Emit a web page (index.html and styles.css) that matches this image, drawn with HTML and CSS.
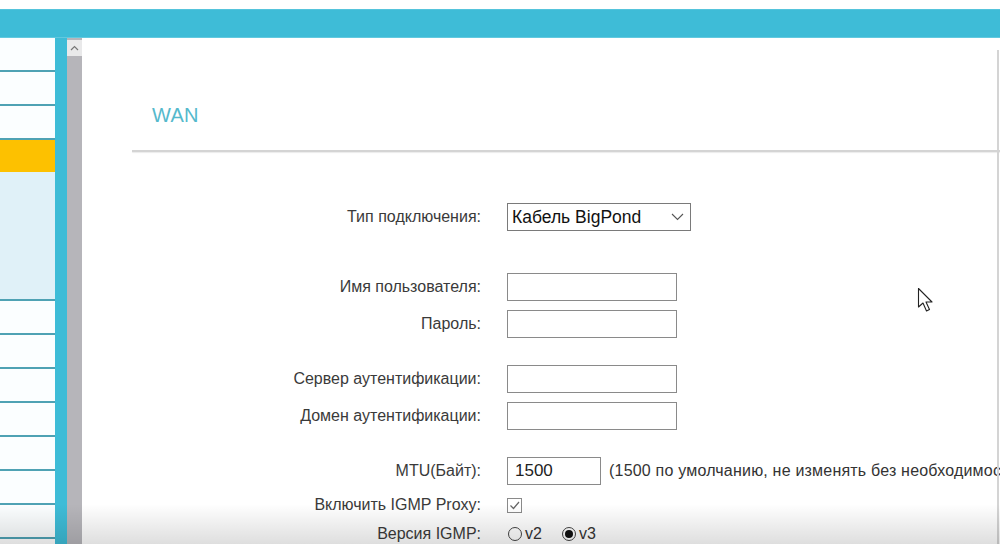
FILE: index.html
```html
<!DOCTYPE html>
<html lang="ru">
<head>
<meta charset="utf-8">
<title>WAN</title>
<link rel="stylesheet" href="styles.css">
</head>
<body>
<div class="page">
  <div class="topgap"></div>
  <div class="header"></div>
  <div class="main">
    <nav class="sidebar">
      <div class="item"></div>
      <div class="item"></div>
      <div class="item"></div>
      <div class="item active"></div>
      <div class="sub"></div>
      <div class="item"></div>
      <div class="item"></div>
      <div class="item"></div>
      <div class="item"></div>
      <div class="item"></div>
      <div class="item"></div>
      <div class="item"></div>
    </nav>
    <div class="divider"></div>
    <div class="scrollbar">
      <div class="scroll-btn">
        <svg width="9" height="6" viewBox="0 0 9 6"><path d="M1 5 L4.5 1.5 L8 5" fill="none" stroke="#777" stroke-width="1.2"/></svg>
      </div>
    </div>
    <section class="content">
      <h1 class="title">WAN</h1>
      <div class="rule"></div>
      <div class="form">
        <div class="row">
          <label class="lbl">Тип подключения:</label>
          <div class="select">
            <span>Кабель BigPond</span>
            <svg width="13" height="8" viewBox="0 0 13 8"><path d="M1 1 L6.5 6.5 L12 1" fill="none" stroke="#555" stroke-width="1.1"/></svg>
          </div>
        </div>
        <div class="row group">
          <label class="lbl">Имя пользователя:</label>
          <div class="input"></div>
        </div>
        <div class="row">
          <label class="lbl">Пароль:</label>
          <div class="input"></div>
        </div>
        <div class="row group2">
          <label class="lbl">Сервер аутентификации:</label>
          <div class="input"></div>
        </div>
        <div class="row">
          <label class="lbl">Домен аутентификации:</label>
          <div class="input"></div>
        </div>
        <div class="row group2">
          <label class="lbl">MTU(Байт):</label>
          <div class="input short">1500</div>
          <span class="hint">(1500 по умолчанию, не изменять без необходимости)</span>
        </div>
        <div class="row small">
          <label class="lbl">Включить IGMP Proxy:</label>
          <span class="checkbox">
            <svg width="13" height="13" viewBox="0 0 13 13"><path d="M2.5 6.5 L5.5 9.5 L11 3" fill="none" stroke="#666" stroke-width="1.2"/></svg>
          </span>
        </div>
        <div class="row small">
          <label class="lbl">Версия IGMP:</label>
          <span class="radio"></span><span class="rtext">v2</span>
          <span class="radio on"></span><span class="rtext">v3</span>
        </div>
      </div>
    </section>
  </div>
  <svg class="cursor" width="20" height="28" viewBox="0 0 20 28">
    <path d="M1.5 1.5 L1.5 20 L6 16 L9.5 24 L12.5 22.6 L9 15 L15 15 Z" fill="#fff" stroke="#222" stroke-width="1.1" stroke-linejoin="round"/>
  </svg>
  <div class="fade"></div>
</div>
</body>
</html>
```
FILE: styles.css
```css
* { box-sizing: border-box; }
html, body { margin: 0; padding: 0; background: #fff; }
body { font-family: "Liberation Sans", Arial, sans-serif; color: #333; }
.page { position: relative; width: 1000px; height: 544px; overflow: hidden; }
.topgap { height: 9px; background: #fff; }
.header { height: 29px; background: #3ebcd7; border-top: 1px solid #55c4dc; border-bottom: 1px solid #62c9df; }
.main { display: flex; height: 506px; }
.sidebar { flex: none; width: 55px; display: flex; flex-direction: column; background: #fff; }
.item { height: 34px; flex: none; background: #fbfeff; border-bottom: 2px solid #4fa2b4; }
.item.active { height: 32px; background: #fdc100; border-bottom: none; }
.sub { height: 129px; flex: none; background: #e0f1f8; border-bottom: 2px solid #4fa2b4; }
.divider { flex: none; width: 12px; background: #3ebcd7; }
.scrollbar { flex: none; width: 15px; background: #b6b5ba; }
.scroll-btn { height: 16px; margin-top: 2px; background: #e9e9ea; display: flex; align-items: center; justify-content: center; }
.content { flex: 1; min-width: 0; position: relative; overflow: hidden; }
.content::after { content: ""; position: absolute; right: 1px; top: 12px; bottom: 0; width: 2px; background: #d4d4d4; }
.title { margin: 0; padding: 63px 0 0 70px; height: 112px; font-weight: normal; font-size: 20px; line-height: 28px; color: #55b9cc; letter-spacing: 0.3px; }
.rule { margin-left: 50px; height: 2px; background: #d4d4d4; box-shadow: 0 1px 1px #ececec; }
.form { padding-top: 51px; }
.row { display: flex; align-items: center; height: 28px; margin-bottom: 9px; }
.row.group { margin-top: 42px; }
.row.group2 { margin-top: 27px; }
.row.small { height: 22px; margin-bottom: 7px; }
.lbl { width: 400px; flex: none; text-align: right; font-size: 16px; color: #3a3a3a; padding-right: 1px; }
.select { flex: none; margin-left: 25px; width: 184px; height: 28px; border: 1px solid #7a7a7a; display: flex; align-items: center; justify-content: space-between; padding: 0 6px 0 4px; font-size: 17.5px; color: #111; }
.input { flex: none; margin-left: 25px; width: 170px; height: 28px; border: 1px solid #8a8a8a; background: #fff; }
.input.short { width: 94px; font-size: 17px; color: #222; padding: 3px 0 0 7px; }
.hint { flex: none; margin-left: 8px; font-size: 16px; color: #333; white-space: nowrap; letter-spacing: 0.2px; }
.checkbox { flex: none; margin-left: 25px; width: 15px; height: 15px; border: 1px solid #8a8a8a; display: flex; align-items: center; justify-content: center; }
.radio { flex: none; margin-left: 26px; width: 14px; height: 14px; border: 1px solid #444; border-radius: 50%; display: inline-flex; align-items: center; justify-content: center; }
.radio.on::after { content: ""; width: 8px; height: 8px; border-radius: 50%; background: #111; }
.radio.on { margin-left: 20px; }
.rtext { margin-left: 3px; font-size: 16px; color: #333; }
.cursor { position: absolute; left: 917px; top: 287px; }
.fade { position: absolute; left: 0; right: 0; bottom: 0; height: 40px; background: linear-gradient(to bottom, rgba(0,0,0,0), rgba(0,0,0,0.13)); pointer-events: none; }
```
